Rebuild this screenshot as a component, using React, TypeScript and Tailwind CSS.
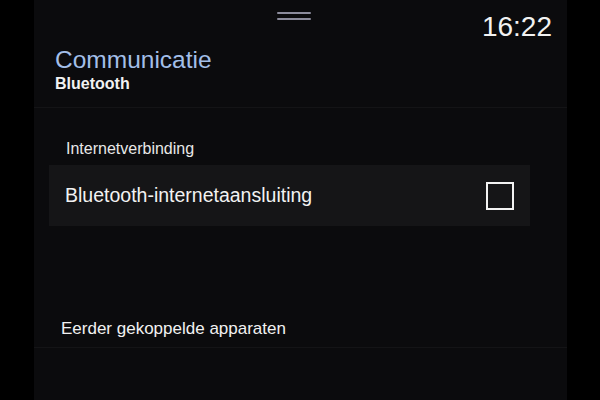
import React, { useState } from "react";

const font = { fontFamily: '"Liberation Sans", Arial, sans-serif' };

const App: React.FC = () => {
  const [checked, setChecked] = useState(false);

  return (
    <div className="flex h-[400px] w-[600px] bg-black" style={font}>
      <div className="w-[34px] shrink-0 bg-black" />

      <div className="relative flex flex-1 flex-col bg-[#0b0b0d]">
        {/* drag handle */}
        <div className="absolute left-[243px] top-[12px] flex flex-col gap-[4px]">
          <div className="h-[2px] w-[34px] rounded-full bg-[#8c8c9c]" />
          <div className="h-[2px] w-[34px] rounded-full bg-[#8c8c9c]" />
        </div>

        {/* top bar */}
        <div className="flex h-[41px] items-end justify-end pr-[15px]">
          <span className="text-[28px] leading-none text-[#f2f2f2]">16:22</span>
        </div>

        {/* header */}
        <div className="border-b border-[#141416] pb-[14px] pl-[21px] pt-[5px]">
          <h1 className="text-[24.5px] font-light leading-[28px] text-[#a3bfe8]">
            Communicatie
          </h1>
          <h2 className="mt-[1px] text-[16px] font-bold leading-[18px] text-[#f2f2f2]">
            Bluetooth
          </h2>
        </div>

        {/* internetverbinding */}
        <div className="mt-[31px] pl-[32px] text-[16px] leading-[20px] text-[#e8e8e8]">
          Internetverbinding
        </div>

        <button
          onClick={() => setChecked(!checked)}
          className="ml-[15px] mt-[6px] flex h-[61px] w-[481px] items-center justify-between bg-[#151517] pl-[16px] pr-[16px] text-left"
        >
          <span className="text-[19.5px] text-[#f2f2f2]">Bluetooth-internetaansluiting</span>
          <span className="flex h-[28px] w-[28px] items-center justify-center border-2 border-[#f2f2f2]">
            {checked && (
              <svg width="18" height="18" viewBox="0 0 24 24" fill="none" stroke="#f2f2f2" strokeWidth="3">
                <path d="M4 12l5 5L20 6" />
              </svg>
            )}
          </span>
        </button>

        {/* gekoppelde apparaten */}
        <div className="mt-[93px] border-b border-[#141416] pb-[8px] pl-[27px] text-[17px] leading-[20px] text-[#f2f2f2]">
          Eerder gekoppelde apparaten
        </div>
      </div>

      <div className="w-[33px] shrink-0 bg-black" />
    </div>
  );
};

export default App;
